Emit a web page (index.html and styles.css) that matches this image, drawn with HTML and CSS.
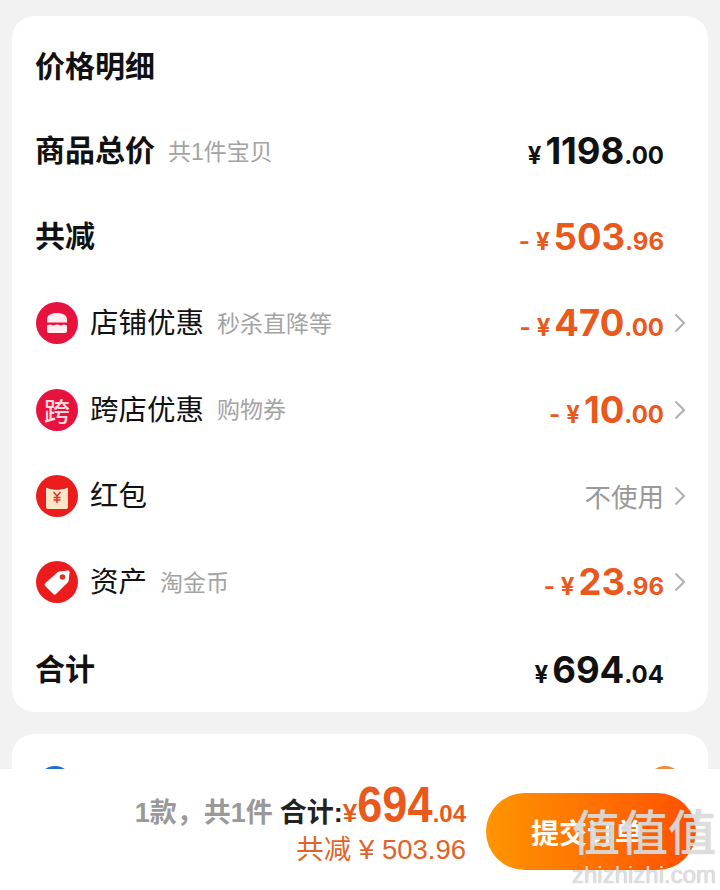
FILE: index.html
```html
<!DOCTYPE html>
<html lang="zh-CN">
<head>
    <meta charset="UTF-8" />
    <meta name="viewport" content="width=device-width, initial-scale=1.0" />
    <title>价格明细</title>
    <link rel="stylesheet" href="styles.css">
</head>
<body>
    <main class="page">
        <section class="card price-card">
            <h1 class="card-title">价格明细</h1>

            <div class="row">
                <div class="row-left"><span class="label strong">商品总价</span><span class="sub">共1件宝贝</span></div>
                <div class="price"><span class="yen">¥</span><span class="int">1198</span><span class="dec">.00</span></div>
            </div>

            <div class="row">
                <div class="row-left"><span class="label strong">共减</span></div>
                <div class="price orange"><span class="minus">-</span><span class="yen">¥</span><span class="int">503</span><span class="dec">.96</span></div>
            </div>

            <div class="row">
                <div class="row-left">
                    <svg class="icon" viewBox="0 0 42 42">
                        <circle cx="21" cy="21" r="21" fill="#e8123f"/>
                        <path d="M11 18c0-5 4-7 10-7s10 2 10 7v2.500H11z" fill="#fdeef0"/>
                        <path d="M11 23.500l3-1 3 1 4-1 4 1 3-1 3 1v5.500a2 2 0 0 1-2 2H13a2 2 0 0 1-2-2z" fill="#fdeef0"/>
                    </svg>
                    <span class="label">店铺优惠</span><span class="sub">秒杀直降等</span>
                </div>
                <div class="row-right">
                    <div class="price orange"><span class="minus">-</span><span class="yen">¥</span><span class="int">470</span><span class="dec">.00</span></div>
                    <svg class="chevron" viewBox="0 0 12 20"><path d="M1.500 1.500L10 10l-8.500 8.500" /></svg>
                </div>
            </div>

            <div class="row">
                <div class="row-left">
                    <span class="icon icon-text">跨</span>
                    <span class="label">跨店优惠</span><span class="sub">购物券</span>
                </div>
                <div class="row-right">
                    <div class="price orange"><span class="minus">-</span><span class="yen">¥</span><span class="int">10</span><span class="dec">.00</span></div>
                    <svg class="chevron" viewBox="0 0 12 20"><path d="M1.500 1.500L10 10l-8.500 8.500" /></svg>
                </div>
            </div>

            <div class="row">
                <div class="row-left">
                    <svg class="icon" viewBox="0 0 42 42">
                        <circle cx="21" cy="21" r="21" fill="#ec1c1c"/>
                        <rect x="10" y="8" width="22" height="26" rx="2" fill="#fde6c8"/>
                        <path d="M10 8h22v4c-6 3-16 3-22 0z" fill="#ec1c1c"/>
                        <path d="M10 12c6 3 16 3 22 0" fill="none" stroke="#a83030" stroke-width="1"/>
                        <path d="M17.500 17l3.500 4 3.500-4M21 21v7M17.500 22.500h7M17.500 25h7" fill="none" stroke="#d8352a" stroke-width="1.500"/>
                    </svg>
                    <span class="label">红包</span>
                </div>
                <div class="row-right">
                    <span class="unused">不使用</span>
                    <svg class="chevron" viewBox="0 0 12 20"><path d="M1.500 1.500L10 10l-8.500 8.500" /></svg>
                </div>
            </div>

            <div class="row">
                <div class="row-left">
                    <svg class="icon" viewBox="0 0 42 42">
                        <circle cx="21" cy="21" r="21" fill="#ec1c1c"/>
                        <path d="M23 10.500l9-1a1.500 1.500 0 0 1 1.600 1.600l-1 9a2 2 0 0 1-.6 1.200L20 33a2 2 0 0 1-2.800 0l-8-8a2 2 0 0 1 0-2.800L21.800 11a2 2 0 0 1 1.200-.5z" fill="#fff"/>
                        <circle cx="26.500" cy="16" r="2.800" fill="#d8352a"/>
                    </svg>
                    <span class="label">资产</span><span class="sub">淘金币</span>
                </div>
                <div class="row-right">
                    <div class="price orange"><span class="minus">-</span><span class="yen">¥</span><span class="int">23</span><span class="dec">.96</span></div>
                    <svg class="chevron" viewBox="0 0 12 20"><path d="M1.500 1.500L10 10l-8.500 8.500" /></svg>
                </div>
            </div>

            <div class="row total-row">
                <div class="row-left"><span class="label strong">合计</span></div>
                <div class="price"><span class="yen">¥</span><span class="int">694</span><span class="dec">.04</span></div>
            </div>
        </section>

        <section class="card next-card">
            <span class="dot blue"></span>
            <span class="dot amber"></span>
        </section>
    </main>

    <footer class="bottom-bar">
        <div class="summary">
            <div class="summary-top">
                <span class="count">1款，共1件</span>
                <span class="total-label">合计:</span>
                <span class="total-price"><span class="t-yen">¥</span><span class="t-int">694</span><span class="t-dec">.04</span></span>
            </div>
            <div class="summary-off">共减 ¥ 503.96</div>
        </div>
        <button class="submit-btn">提交订单</button>
    </footer>

    <div class="watermark">
        <div class="wm-logo">值值值</div>
        <div class="wm-url">zhizhizhi.com</div>
    </div>
</body>
</html>
```

FILE: styles.css
```css
* {
    box-sizing: border-box;
}

html, body {
    margin: 0;
    height: 890px;
    overflow: hidden;
}

body {
    position: relative;
    background-color: #f2f2f2;
    color: #111;
    font-family: "Liberation Sans", "Noto Sans CJK SC", sans-serif;
}

.page {
    padding: 16px 12px 0;
    display: flex;
    flex-direction: column;
    gap: 22px;
}

.card {
    background-color: #fff;
    border-radius: 22px;
}

.price-card {
    height: 696px;
    padding: 10px 24px 0;
}

.card-title {
    margin: 0 0 0 -1px;
    height: 82px;
    line-height: 82px;
    font-size: 30px;
    font-weight: 700;
}

.row {
    height: 86.2px;
    display: flex;
    align-items: center;
    justify-content: space-between;
}

.total-row {
    margin-top: 2px;
}

.row-left,
.row-right {
    display: flex;
    align-items: center;
}

.label {
    font-size: 28.500px;
    line-height: 40px;
    font-weight: 400;
}

.label.strong {
    margin-left: -1px;
    font-size: 30px;
    font-weight: 700;
}

.sub {
    margin: -3px 0 0 13px;
    font-size: 23px;
    color: #a3a3a3;
    font-weight: 400;
}

.icon {
    flex: none;
    width: 42px;
    height: 42px;
    margin-right: 12px;
}

.icon-text {
    display: grid;
    place-items: center;
    border-radius: 50%;
    background-color: #e8123f;
    color: #fbd9df;
    font-size: 26px;
    font-weight: 500;
}

.price {
    font-family: Inter, "Liberation Sans", sans-serif;
    font-weight: 700;
    white-space: nowrap;
    margin-right: 20px;
}

.row-right .price {
    margin-right: 10px;
}

.price.orange {
    color: #e9591c;
}

.minus {
    font-size: 24px;
    margin-right: 6px;
}

.yen {
    font-size: 24px;
    margin-right: 4px;
}

.int {
    font-size: 36.500px;
}

.dec {
    font-size: 24px;
}

.chevron {
    width: 12px;
    height: 20px;
    margin-right: -2px;
    fill: none;
    stroke: #b0b0b0;
    stroke-width: 2;
}

.unused {
    font-size: 26.500px;
    color: #999;
    margin-right: 10px;
}

.next-card {
    height: 120px;
    padding: 32px 26px 0;
    display: flex;
    justify-content: space-between;
}

.dot {
    width: 34px;
    height: 34px;
    border-radius: 50%;
}

.dot.blue {
    background-color: #1f6fc8;
}

.dot.amber {
    background-color: #f08a3c;
}

.bottom-bar {
    position: absolute;
    left: 0;
    right: 0;
    bottom: 0;
    height: 121px;
    background-color: #fff;
    display: flex;
    justify-content: flex-end;
    align-items: flex-start;
    padding: 24px 24px 0 0;
}

.summary {
    margin-right: 20px;
    text-align: right;
}

.summary-top {
    display: flex;
    align-items: baseline;
    justify-content: flex-end;
    height: 36px;
    line-height: 36px;
    white-space: nowrap;
    margin-top: -6px;
}

.count {
    font-size: 27px;
    font-weight: 700;
    color: #999;
    margin-right: 7px;
}

.total-label {
    font-size: 27px;
    font-weight: 700;
    color: #222;
}

.total-price {
    color: #e9591c;
    font-weight: 700;
}

.t-yen {
    font-size: 26px;
}

.t-int {
    display: inline-block;
    margin-left: -8px;
    font-size: 50px;
    transform: scaleX(0.9);
    transform-origin: right;
}

.t-dec {
    font-size: 24px;
}

.summary-off {
    margin-top: 10px;
    font-size: 27.500px;
    line-height: 34px;
    color: #e0632a;
    white-space: nowrap;
}

.submit-btn {
    width: 210px;
    height: 77px;
    border: none;
    border-radius: 39px;
    background: linear-gradient(90deg, #ff9500, #ff5000);
    color: #fff;
    font-family: inherit;
    font-size: 28px;
    font-weight: 700;
    text-align: left;
    padding: 0 0 0 45px;
}

.watermark {
    position: absolute;
    left: 570px;
    top: 805px;
    width: 148px;
    color: rgba(238, 238, 238, 0.8);
    text-shadow: 0 0 1px rgba(120, 120, 120, 0.7);
    text-align: center;
}

.wm-logo {
    font-size: 48px;
    line-height: 58px;
    font-weight: 500;
}

.wm-url {
    font-size: 24px;
    line-height: 24px;
}
```
